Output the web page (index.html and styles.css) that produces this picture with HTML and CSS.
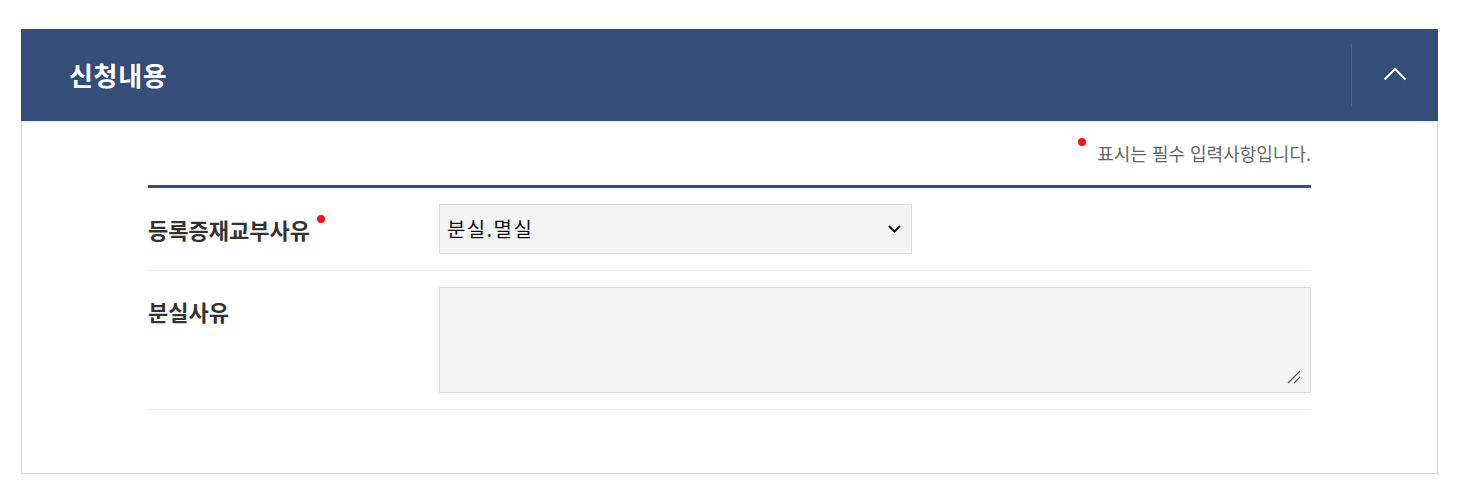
FILE: index.html
```html
<!DOCTYPE html>
<html lang="ko">
<head>
<meta charset="utf-8">
<title>신청내용</title>
<link rel="stylesheet" href="styles.css">
</head>
<body>
<section class="panel">
  <header class="panel-head">
    <h2 class="panel-title">신청내용</h2>
    <button class="toggle" type="button" aria-label="접기">
      <svg width="24" height="14" viewBox="0 0 24 14"><path d="M1.5 12.5 L12 2 L22.5 12.5" fill="none" stroke="#fff" stroke-width="2"/></svg>
    </button>
  </header>
  <div class="panel-body">
    <p class="req-note"><span class="dot"></span>표시는 필수 입력사항입니다.</p>
    <div class="form-table">
      <div class="row">
        <div class="label">등록증재교부사유<span class="dot dot-label"></span></div>
        <div class="field">
          <div class="select">
            <span class="select-text">분실.멸실</span>
            <svg class="caret" width="13" height="8" viewBox="0 0 13 8"><path d="M1 1 L6.5 6.5 L12 1" fill="none" stroke="#111" stroke-width="2"/></svg>
          </div>
        </div>
      </div>
      <div class="row">
        <div class="label">분실사유</div>
        <div class="field">
          <div class="textarea">
            <svg class="grip" width="14" height="14" viewBox="0 0 14 14"><path d="M1 13 L13 1 M7 13 L13 7" stroke="#555" stroke-width="1.3"/></svg>
          </div>
        </div>
      </div>
    </div>
  </div>
</section>
</body>
</html>
```

FILE: styles.css
```css
* { box-sizing: border-box; }
html, body { margin: 0; padding: 0; background: #fff; }
body {
  font-family: "Noto Sans CJK KR", "Noto Sans", sans-serif;
  color: #333;
}
.panel {
  margin: 29px 21px 0 21px;
}
.panel-head {
  height: 92px;
  background: #344d79;
  display: flex;
  align-items: center;
  justify-content: space-between;
  padding-left: 48px;
}
.panel-title {
  margin: 0;
  color: #fff;
  font-size: 26px;
  font-weight: 700;
  letter-spacing: 0.7px;
  padding-bottom: 2px;
}
.toggle {
  width: 87px;
  height: 62px;
  border: 0;
  border-left: 1px solid #4a6291;
  background: transparent;
  display: flex;
  align-items: center;
  justify-content: center;
  padding: 0 0 2px 0;
  cursor: pointer;
}
.panel-body {
  border: 1px solid #d6d6d6;
  border-top: 1px solid #e4e4e4;
  padding: 16px 126px 63px 126px;
}
.req-note {
  margin: 0;
  text-align: right;
  font-size: 18px;
  color: #666;
  letter-spacing: 0;
  line-height: 30px;
  height: 47px;
}
.dot {
  display: inline-block;
  width: 8px;
  height: 8px;
  border-radius: 50%;
  background: #f01414;
  vertical-align: top;
  margin-right: 11px;
  margin-top: 0;
}
.form-table {
  border-top: 3px solid #344d79;
}
.row {
  display: flex;
  border-bottom: 1px solid #ebebeb;
  padding: 16px 0;
}
.label {
  width: 291px;
  flex: none;
  font-size: 22px;
  font-weight: 700;
  color: #333;
  letter-spacing: 0;
  padding-top: 9px;
  line-height: 32px;
}
.row + .row .label { padding-top: 8px; }
.dot-label {
  margin: 2px 0 0 7px;
}
.field { flex: 1; }
.select {
  width: 473px;
  height: 50px;
  background: #f4f4f4;
  border: 1px solid #dcdcdc;
  display: flex;
  align-items: center;
  justify-content: space-between;
  padding: 0 10px 0 7px;
}
.select-text {
  font-size: 20px;
  color: #111;
  letter-spacing: 1.4px;
  padding-bottom: 2px;
}
.textarea {
  height: 106px;
  background: #f4f4f4;
  border: 1px solid #dcdcdc;
  position: relative;
}
.grip {
  position: absolute;
  right: 9px;
  bottom: 8px;
}
```
